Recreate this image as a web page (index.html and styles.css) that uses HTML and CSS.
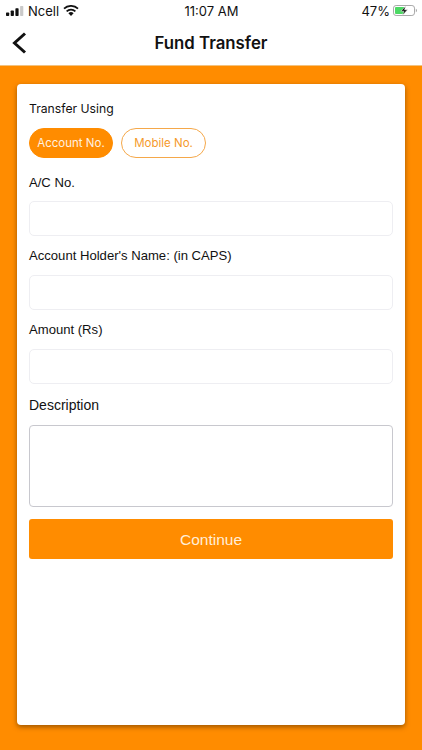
FILE: index.html
```html
<!DOCTYPE html>
<html lang="en">
<head>
  <meta charset="UTF-8">
  <meta name="viewport" content="width=device-width, initial-scale=1.0">
  <title>Fund Transfer</title>
  <link rel="stylesheet" href="styles.css">
</head>
<body>
  <div class="status-bar">
    <div class="status-left">
      <svg class="signal" width="18" height="10" viewBox="0 0 18 10">
        <rect x="0" y="6.6" width="3.2" height="3.4" rx="0.7" fill="#111"/>
        <rect x="4.7" y="4.6" width="3.2" height="5.4" rx="0.7" fill="#111"/>
        <rect x="9.4" y="2.2" width="3.2" height="7.8" rx="0.7" fill="#111"/>
        <rect x="14.1" y="0" width="3.2" height="10" rx="0.7" fill="#c9c9c9"/>
      </svg>
      <span>Ncell</span>
      <svg class="wifi" width="16" height="11" viewBox="0 0 16 11">
        <path d="M8 11 5.4 8.2a3.7 3.7 0 0 1 5.2 0Z" fill="#111"/>
        <path d="M3.6 6.4a6.3 6.3 0 0 1 8.8 0" fill="none" stroke="#111" stroke-width="1.7"/>
        <path d="M1 3.7a10 10 0 0 1 14 0" fill="none" stroke="#111" stroke-width="1.7"/>
      </svg>
    </div>
    <div class="status-time">11:07 AM</div>
    <div class="status-right">
      <span>47%</span>
      <svg class="battery" width="24" height="11" viewBox="0 0 24 11">
        <rect x="0.5" y="0.5" width="21" height="10" rx="2.6" fill="none" stroke="#a9a9a9"/>
        <rect x="2" y="2" width="9.5" height="7" rx="1" fill="#4cd964"/>
        <path d="M22.8 3.7c.8.3 1.2 1 1.2 1.8s-.4 1.5-1.2 1.8Z" fill="#a9a9a9"/>
        <path d="M12.8 1 7.8 6.2h3l-1.2 3.9 5-5.3h-3Z" fill="#111" stroke="#fff" stroke-width="0.5"/>
      </svg>
    </div>
  </div>

  <div class="nav-bar">
    <svg class="back" width="15" height="22" viewBox="0 0 15 22">
      <path d="M13 1.5 2.5 11 13 20.5" fill="none" stroke="#111" stroke-width="3"/>
    </svg>
    <div class="nav-title">Fund Transfer</div>
  </div>

  <div class="content">
    <div class="card">
      <div class="label label-using">Transfer Using</div>
      <div class="pills">
        <div class="pill active">Account No.</div>
        <div class="pill">Mobile No.</div>
      </div>
      <div class="label label-ac">A/C No.</div>
      <div class="field"></div>
      <div class="label label-name">Account Holder's Name: (in CAPS)</div>
      <div class="field"></div>
      <div class="label label-amount">Amount (Rs)</div>
      <div class="field"></div>
      <div class="label label-desc">Description</div>
      <div class="textarea"></div>
      <div class="continue">Continue</div>
    </div>
  </div>
</body>
</html>
```

FILE: styles.css
```css
* {
  box-sizing: border-box;
}
html, body {
  height: 100%;
}
body {
  margin: 0;
  width: 422px;
  height: 750px;
  overflow: hidden;
  display: flex;
  flex-direction: column;
  background: #ff8c00;
  font-family: "Open Sans", "Liberation Sans", sans-serif;
  color: #111;
}
.status-bar {
  height: 21px;
  padding: 0 5px 0 6px;
  background: #fff;
  display: grid;
  grid-template-columns: 1fr auto 1fr;
  align-items: center;
  font-family: Inter, "Liberation Sans", sans-serif;
  font-size: 13px;
  flex: none;
}
.status-left {
  display: flex;
  align-items: center;
  gap: 4px;
}
.status-right {
  display: flex;
  align-items: center;
  justify-content: flex-end;
  gap: 3px;
  font-size: 13px;
}
.nav-bar {
  height: 45px;
  background: #fff;
  display: flex;
  align-items: center;
  justify-content: center;
  position: relative;
  flex: none;
  border-bottom: 1px solid #f2c27f;
}
.back {
  position: absolute;
  left: 12px;
  top: 11px;
}
.nav-title {
  font-family: Inter, "Liberation Sans", sans-serif;
  font-size: 16.8px;
  font-weight: 600;
  margin-top: -1px;
}
.content {
  flex: 1;
  padding: 18px 17px 25px;
}
.card {
  height: 641px;
  padding: 0 12px;
  background: #fff;
  border-radius: 4px;
  box-shadow: 0 2px 5px rgba(90, 50, 0, 0.6);
}
.label {
  padding-top: 1px;
  font-family: "Liberation Sans", sans-serif;
  font-size: 13.1px;
  line-height: 16px;
}
.label-using {
  padding-top: 17px;
  height: 44px;
  font-family: Inter, "Liberation Sans", sans-serif;
  font-size: 12.2px;
}
.pills {
  display: flex;
  gap: 8px;
}
.pill {
  width: 85px;
  height: 30px;
  border: 1.2px solid #f5a84a;
  border-radius: 16px;
  display: flex;
  align-items: center;
  justify-content: center;
  font-family: Inter, "Liberation Sans", sans-serif;
  font-size: 11.5px;
  color: #f59a2c;
}
.pill.active {
  width: 84px;
  background: #ff8c00;
  border-color: #ff8c00;
  color: #fff1e0;
}
.label-ac {
  margin-top: 16px;
  height: 27px;
}
.label-name {
  margin-top: 11px;
  height: 28px;
}
.label-amount {
  margin-top: 11px;
  height: 28px;
}
.label-desc {
  margin-top: 13px;
  height: 28px;
  padding-top: 0;
  font-size: 14px;
}
.field {
  height: 35px;
  border: 1px solid #eeeef2;
  border-radius: 5px;
}
.textarea {
  height: 82px;
  border: 1px solid #c8c8ce;
  border-radius: 4px;
}
.continue {
  margin-top: 12px;
  height: 40px;
  padding-top: 1px;
  background: #ff8c00;
  border-radius: 3px;
  color: #ffeed8;
  display: flex;
  align-items: center;
  justify-content: center;
  font-family: "Liberation Sans", sans-serif;
  font-size: 15.5px;
}
```
